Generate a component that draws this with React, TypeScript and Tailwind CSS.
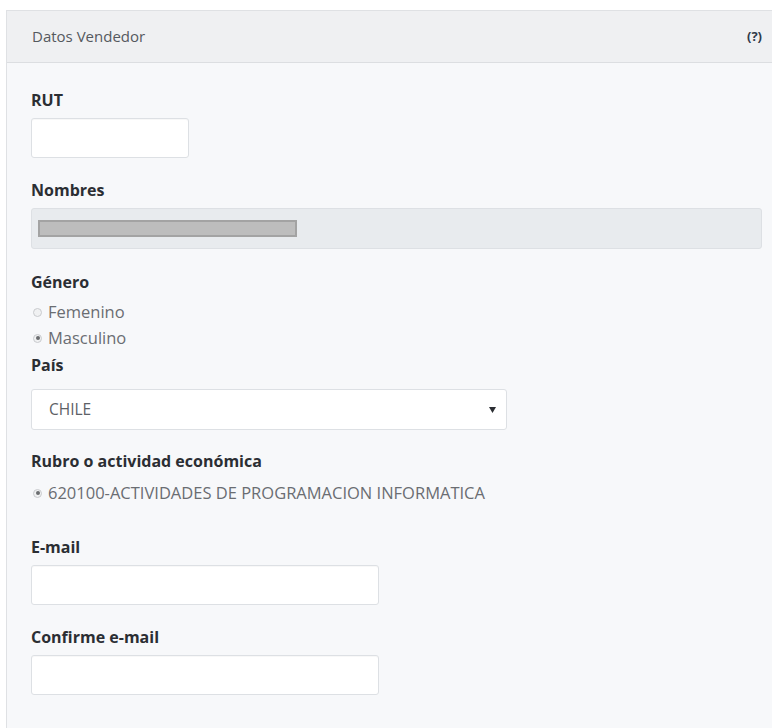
import React from "react";

function Label({ children, className = "" }: { children: React.ReactNode; className?: string }) {
  return (
    <div className={`h-5 leading-5 text-[16px] font-bold text-[#2b2e33] ${className}`}>{children}</div>
  );
}

function Radio({ checked, label, className = "" }: { checked?: boolean; label: string; className?: string }) {
  return (
    <div className={`flex h-5 items-center ${className}`}>
      <span className="ml-[2px] flex h-[9px] w-[9px] items-center justify-center rounded-full border border-[#c9cbce] bg-[#f0f1f2]">
        {checked && <span className="h-[4px] w-[4px] rounded-full bg-[#6b6d70]" />}
      </span>
      <span className="ml-[6px] text-[16.5px] text-[#6a6d72]">{label}</span>
    </div>
  );
}

function TextInput({ className = "" }: { className?: string }) {
  return (
    <div
      className={`h-[40px] rounded-[3px] border border-[#dde0e4] bg-white shadow-[inset_0_1px_1px_rgba(0,0,0,0.03)] ${className}`}
    />
  );
}

export default function App() {
  return (
    <div className="min-h-[728px] overflow-hidden bg-white pt-[10px] pl-[6px] font-['Open_Sans',sans-serif]">
      <div className="w-[800px] border-l border-t border-[#dfe1e4] bg-[#f7f8fa] pb-[40px]">
        <div className="flex h-[52px] items-center justify-between border-b border-[#dcdee1] bg-[#eff0f2] pl-[25px] pr-[44px]">
          <span className="text-[15px] text-[#55595e]">Datos Vendedor</span>
          <span className="text-[13px] font-bold text-[#2f3a4a]">(?)</span>
        </div>

        <div className="pl-[24px]">
          <Label className="mt-[27px]">RUT</Label>
          <TextInput className="mt-2 w-[158px] h-[39px]" />

          <Label className="mt-[22px]">Nombres</Label>
          <div className="mt-2 flex h-[41px] w-[731px] items-center rounded-[3px] border border-[#dde0e4] bg-[#e8ebee] pl-[6px]">
            <div className="h-[17px] w-[259px] border-2 border-[#a3a3a3] bg-[#bdbdbd]" />
          </div>

          <Label className="mt-[23px]">Género</Label>
          <Radio className="mt-[10px]" label="Femenino" />
          <Radio className="mt-[6px]" checked label="Masculino" />

          <Label className="mt-[7px]">País</Label>
          <div className="mt-[14px] flex h-[41px] w-[476px] items-center justify-between rounded-[3px] border border-[#dde0e4] bg-white pl-[17px] pr-[9px]">
            <span className="text-[15.5px] text-[#5d6166]">CHILE</span>
            <svg width="7" height="6" viewBox="0 0 7 6" className="mr-[1px]">
              <path d="M0 0 H7 L3.5 6 Z" fill="#2b2e33" />
            </svg>
          </div>

          <Label className="mt-[21px]">Rubro o actividad económica</Label>
          <Radio className="mt-[12px]" checked label="620100-ACTIVIDADES DE PROGRAMACION INFORMATICA" />

          <Label className="mt-[34px]">E-mail</Label>
          <TextInput className="mt-2 w-[348px]" />

          <Label className="mt-[22px]">Confirme e-mail</Label>
          <TextInput className="mt-2 w-[348px]" />
        </div>
      </div>
    </div>
  );
}
